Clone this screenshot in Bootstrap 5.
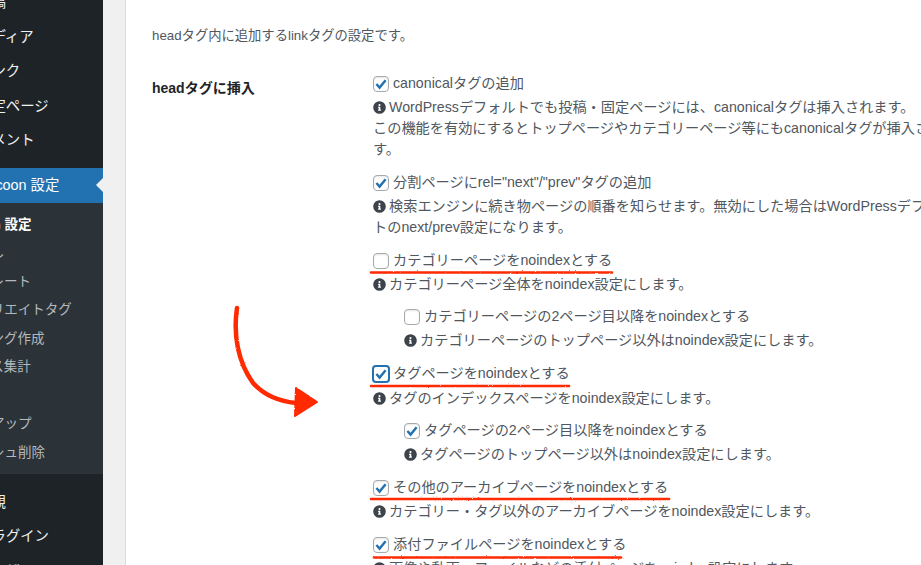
<!DOCTYPE html>
<html lang="ja">
<head>
<meta charset="UTF-8">
<title>Cocoon 設定</title>
<link href="https://cdn.jsdelivr.net/npm/bootstrap@5.3.3/dist/css/bootstrap.min.css" rel="stylesheet">
<style>
html, body { height: 565px; overflow: hidden; }
body {
    background: #f0f0f1;
    color: #50575e;
    font-family: "Liberation Sans", "Noto Sans CJK JP", sans-serif;
    font-size: 14.2px;
    position: relative;
}
.wp-side { width: 103px; height: 565px; background: #1d2327; color: #f0f0f1; overflow: hidden; position: relative; flex: none; }
.wp-menu { width: 200px; font-size: 14.4px; margin: -15px 0 0 -23px; }
.wp-menu li { height: 34.5px; line-height: 34.5px; white-space: nowrap; }
.wp-menu .gap-top { margin-top: 10px; margin-left: -10px; padding-left: 10px; height: 35px; }
.wp-menu-end.wp-menu { margin-top: 11px; }
.wp-active { background: #2271b1; color: #fff; }
.wp-notch { position: absolute; right: 0; top: 178px; border: 7px solid transparent; border-left: 0; border-right-color: #f0f0f1; }
.wp-sub { background: #2c3338; color: #b4b9be; width: 153px; margin-left: -49.5px; padding: 8px 0 7px; font-size: 13.5px; height: 271px; white-space: nowrap; }
.wp-sub div { height: 28.5px; line-height: 28.5px; }
.wp-sub .wp-current { color: #fff; font-weight: 700; }
.wp-gutter { width: 22px; flex: none; }
.wp-panel { flex: 1 1 auto; min-width: 0; background: #fff; border-left: 1px solid #dcdcde; padding: 0 0 0 26px; overflow: hidden; white-space: nowrap; }
.wp-intro { margin: 25px 0 0; height: 21px; line-height: 21px; font-size: 13.3px; }
.wp-row { margin-top: 27px; }
.wp-th { width: 221px; flex: none; color: #1d2327; font-weight: 700; font-size: 14px; line-height: 21px; padding-top: 5px; }
.wp-field { line-height: 21px; }
.wp-check { display: flex; align-items: center; gap: 4px; height: 21px; margin: 0 0 3px; color: #50575e; }
.wp-check .form-check-input {
    width: 16px; height: 16px; margin: 0; flex: none; float: none;
    border: 1px solid #a7aaad; border-radius: 4px; background-color: #fff; box-shadow: inset 0 1px 2px rgba(0,0,0,.1);
}
.wp-check .form-check-input:checked {
    background-color: #fff;
    border-color: #a7aaad;
    background-size: 16px;
    background-image: url("data:image/svg+xml,%3csvg xmlns='http://www.w3.org/2000/svg' viewBox='0 0 16 16'%3e%3cpath fill='none' stroke='%232271b1' stroke-width='2.4' d='M3.4 8l3.2 3.6 6-7.4'/%3e%3c/svg%3e");
}
.wp-check .form-check-input.wp-focus { border: 2px solid #2271b1; box-shadow: none; width: 18px; height: 18px; margin: 0 -1px; }
.wp-desc { display: block; }
.wp-desc svg { width: 13px; height: 13px; vertical-align: -1.5px; margin-right: 3px; }
.wp-item { padding-bottom: 12px; }
.wp-item.wp-parent { padding-bottom: 11px; }
.wp-item.wp-parent .wp-check-tall { margin-bottom: 4px; }
.wp-child { padding: 0 0 12px 31px; }
.wp-marks { position: absolute; left: 0; top: 0; width: 921px; height: 565px; pointer-events: none; }
</style>
</head>
<body class="d-flex">

<svg width="0" height="0" class="position-absolute">
    <symbol id="info" viewBox="0 0 512 512"><path fill="#3c434a" d="M256 8a248 248 0 1 0 0 496 248 248 0 0 0 0-496zm0 110a42 42 0 1 1 0 84 42 42 0 0 1 0-84zm56 254c0 7-5 12-12 12h-88c-7 0-12-5-12-12v-24c0-7 5-12 12-12h12v-64h-12c-7 0-12-5-12-12v-24c0-7 5-12 12-12h64c7 0 12 5 12 12v100h12c7 0 12 5 12 12z"/></symbol>
</svg>

<aside class="wp-side">
    <ul class="wp-menu list-unstyled mb-0">
        <li>投稿</li>
        <li>メディア</li>
        <li>リンク</li>
        <li>固定ページ</li>
        <li>コメント</li>
        <li class="wp-active gap-top">Cocoon 設定</li>
    </ul>
    <div class="wp-notch"></div>
    <div class="wp-sub">
        <div class="wp-current">Cocoon 設定</div>
        <div>吹き出し</div>
        <div>テンプレート</div>
        <div>アフィリエイトタグ</div>
        <div>ランキング作成</div>
        <div>アクセス集計</div>
        <div>ログ</div>
        <div>バックアップ</div>
        <div>キャッシュ削除</div>
    </div>
    <ul class="wp-menu wp-menu-end list-unstyled mb-0">
        <li>外観</li>
        <li>プラグイン</li>
        <li>ユーザー</li>
    </ul>
</aside>
<div class="wp-gutter"></div>

<main class="wp-panel">
    <p class="wp-intro">headタグ内に追加するlinkタグの設定です。</p>
    <div class="wp-row d-flex">
        <div class="wp-th">headタグに挿入</div>
        <div class="wp-field">
            <div class="wp-item">
                <label class="wp-check"><input class="form-check-input" type="checkbox" checked>canonicalタグの追加</label>
                <span class="wp-desc"><svg><use href="#info"/></svg>WordPressデフォルトでも投稿・固定ページには、canonicalタグは挿入されます。<br>この機能を有効にするとトップページやカテゴリーページ等にもcanonicalタグが挿入されま<br>す。</span>
            </div>
            <div class="wp-item">
                <label class="wp-check"><input class="form-check-input" type="checkbox" checked>分割ページにrel="next"/"prev"タグの追加</label>
                <span class="wp-desc"><svg><use href="#info"/></svg>検索エンジンに続き物ページの順番を知らせます。無効にした場合はWordPressデフォル<br>トのnext/prev設定になります。</span>
            </div>
            <div class="wp-item wp-parent">
                <label class="wp-check"><input class="form-check-input" type="checkbox">カテゴリーページをnoindexとする</label>
                <span class="wp-desc"><svg><use href="#info"/></svg>カテゴリーページ全体をnoindex設定にします。</span>
            </div>
            <div class="wp-child">
                <label class="wp-check"><input class="form-check-input" type="checkbox">カテゴリーページの2ページ目以降をnoindexとする</label>
                <span class="wp-desc"><svg><use href="#info"/></svg>カテゴリーページのトップページ以外はnoindex設定にします。</span>
            </div>
            <div class="wp-item wp-parent">
                <label class="wp-check wp-check-tall"><input class="form-check-input wp-focus" type="checkbox" checked>タグページをnoindexとする</label>
                <span class="wp-desc"><svg><use href="#info"/></svg>タグのインデックスページをnoindex設定にします。</span>
            </div>
            <div class="wp-child">
                <label class="wp-check"><input class="form-check-input" type="checkbox" checked>タグページの2ページ目以降をnoindexとする</label>
                <span class="wp-desc"><svg><use href="#info"/></svg>タグページのトップページ以外はnoindex設定にします。</span>
            </div>
            <div class="wp-item">
                <label class="wp-check"><input class="form-check-input" type="checkbox" checked>その他のアーカイブページをnoindexとする</label>
                <span class="wp-desc"><svg><use href="#info"/></svg>カテゴリー・タグ以外のアーカイブページをnoindex設定にします。</span>
            </div>
            <div class="wp-item">
                <label class="wp-check"><input class="form-check-input" type="checkbox" checked>添付ファイルページをnoindexとする</label>
                <span class="wp-desc"><svg><use href="#info"/></svg>画像や動画、ファイルなどの添付ページをnoindex設定にします。</span>
            </div>
        </div>
    </div>
</main>

<!-- hand drawn annotation on top of the screenshot -->
<svg class="wp-marks" viewBox="0 0 921 565">
    <defs>
        <filter id="rough" x="-5%" y="-50%" width="110%" height="200%">
            <feTurbulence type="fractalNoise" baseFrequency="0.6" numOctaves="2" seed="4"/>
            <feDisplacementMap in="SourceGraphic" scale="2"/>
        </filter>
    </defs>
    <g filter="url(#rough)" fill="none" stroke="#ff2a00" stroke-width="2.6" stroke-linecap="round">
        <path d="M371 272.5H612"/>
        <path d="M371 386H569"/>
        <path d="M371 499H669"/>
        <path d="M374 557.5H621"/>
        <path stroke-width="4.5" d="M237 308C233 335 238 362 253 383C262 393 276 401 296 403"/>
        <path fill="#ff2a00" stroke-width="2" stroke-linejoin="round" d="M296 388L317 402L295 416Z"/>
    </g>
</svg>

<script src="https://cdn.jsdelivr.net/npm/bootstrap@5.3.3/dist/js/bootstrap.bundle.min.js"></script>
</body>
</html>
